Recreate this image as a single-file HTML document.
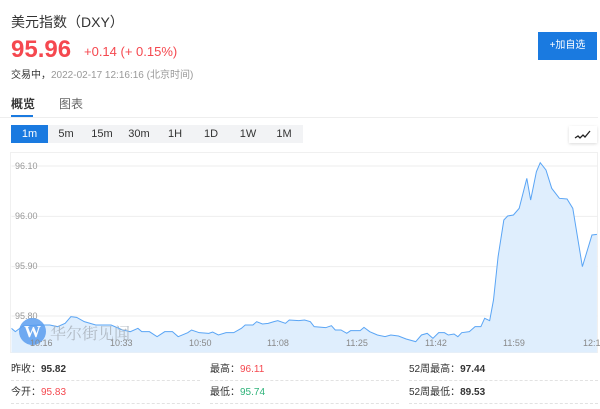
<!DOCTYPE html>
<html><head><meta charset="utf-8"><style>
*{margin:0;padding:0;box-sizing:border-box}
body{width:600px;height:409px;background:#fff;font-family:"Liberation Sans","Noto Sans CJK SC",sans-serif;position:relative;overflow:hidden;color:#333}
.a{position:absolute;white-space:nowrap}
.tb{position:absolute;top:125px;height:18px;font-size:11px;line-height:18px;text-align:center;color:#333}
.cell{position:absolute;width:189px;border-bottom:1px dashed #e2e2e2;height:22px;font-size:10px;line-height:22px;color:#333}
.cell b{font-weight:bold}
</style></head><body>
<div class="a" style="left:11px;top:12px;font-size:14px;color:#333">美元指数（DXY）</div>
<div class="a" style="left:11px;top:36px;font-size:24px;font-weight:bold;color:#f5484f">95.96</div>
<div class="a" style="left:84px;top:44px;font-size:13px;color:#f5484f">+0.14 (+ 0.15%)</div>
<div class="a" style="left:11px;top:66px;font-size:10px;color:#333">交易中，<span style="color:#999">2022-02-17 12:16:16 (北京时间)</span></div>
<div class="a" style="left:538px;top:32px;width:59px;height:28px;background:#1a7ae0;color:#fff;font-size:10px;line-height:28px;text-align:center">+加自选</div>
<div class="a" style="left:11px;top:95px;font-size:12px;font-weight:bold;color:#333">概览</div>
<div class="a" style="left:59px;top:95px;font-size:12px;color:#666">图表</div>
<div class="a" style="left:11px;top:115px;width:22px;height:2px;background:#1a7ae0"></div>
<div class="a" style="left:0;top:117px;width:598px;height:1px;background:#eee"></div>
<div class="a" style="left:11px;top:125px;width:292px;height:18px;background:#f2f3f5"></div>
<div class="tb" style="left:11px;width:37px;background:#1a7ae0;color:#fff">1m</div>
<div class="tb" style="left:55px;width:22px">5m</div>
<div class="tb" style="left:90px;width:24px">15m</div>
<div class="tb" style="left:126px;width:26px">30m</div>
<div class="tb" style="left:165px;width:20px">1H</div>
<div class="tb" style="left:201px;width:20px">1D</div>
<div class="tb" style="left:238px;width:20px">1W</div>
<div class="tb" style="left:274px;width:20px">1M</div>
<div class="a" style="left:569px;top:126px;width:28px;height:17px;background:#fff;box-shadow:0 1px 3px rgba(0,0,0,.15)">
<svg width="28" height="17" viewBox="0 0 28 17"><path d="M6 12 L9 10 L11 12 L14 9 L16 11 L21 5" fill="none" stroke="#222" stroke-width="1.3"/></svg></div>
<div class="a" style="left:10px;top:152px;width:588px;height:201px;border:1px solid #f0f0f0"></div>
<svg class="a" style="left:0;top:140px" width="600" height="220" viewBox="0 0 1566 660" preserveAspectRatio="none">
<g stroke="#eee" stroke-width="1" vector-effect="non-scaling-stroke">
<line x1="30" y1="78" x2="1560" y2="78" vector-effect="non-scaling-stroke"/>
<line x1="30" y1="229" x2="1560" y2="229" vector-effect="non-scaling-stroke"/>
<line x1="30" y1="380" x2="1560" y2="380" vector-effect="non-scaling-stroke"/>
<line x1="30" y1="528" x2="1560" y2="528" vector-effect="non-scaling-stroke"/>
</g>
<path d="M30 565 L40 575 L60 558 L100 555 L130 555 L150 560 L170 550 L185 530 L200 532 L220 545 L250 555 L290 555 L320 570 L340 575 L360 565 L370 575 L390 575 L410 590 L430 575 L450 575 L465 590 L490 578 L500 570 L520 578 L545 580 L555 576 L570 585 L590 578 L610 578 L630 565 L640 555 L660 555 L670 545 L685 552 L700 550 L715 545 L725 542 L745 550 L755 540 L780 542 L795 540 L810 545 L820 560 L850 563 L865 557 L875 570 L890 570 L905 580 L915 572 L940 572 L950 562 L965 575 L985 585 L1005 590 L1020 585 L1040 588 L1060 597 L1085 605 L1100 585 L1115 580 L1130 595 L1145 578 L1160 578 L1170 585 L1185 582 L1195 590 L1205 578 L1225 575 L1240 560 L1255 560 L1265 535 L1278 542 L1288 480 L1300 350 L1315 240 L1325 228 L1340 225 L1355 205 L1375 115 L1385 180 L1400 95 L1410 68 L1425 90 L1440 145 L1460 175 L1480 177 L1495 205 L1520 380 L1545 285 L1558 283 L1558 638 L30 638 Z" fill="#dfeefd" stroke="none"/>
<path d="M30 565 L40 575 L60 558 L100 555 L130 555 L150 560 L170 550 L185 530 L200 532 L220 545 L250 555 L290 555 L320 570 L340 575 L360 565 L370 575 L390 575 L410 590 L430 575 L450 575 L465 590 L490 578 L500 570 L520 578 L545 580 L555 576 L570 585 L590 578 L610 578 L630 565 L640 555 L660 555 L670 545 L685 552 L700 550 L715 545 L725 542 L745 550 L755 540 L780 542 L795 540 L810 545 L820 560 L850 563 L865 557 L875 570 L890 570 L905 580 L915 572 L940 572 L950 562 L965 575 L985 585 L1005 590 L1020 585 L1040 588 L1060 597 L1085 605 L1100 585 L1115 580 L1130 595 L1145 578 L1160 578 L1170 585 L1185 582 L1195 590 L1205 578 L1225 575 L1240 560 L1255 560 L1265 535 L1278 542 L1288 480 L1300 350 L1315 240 L1325 228 L1340 225 L1355 205 L1375 115 L1385 180 L1400 95 L1410 68 L1425 90 L1440 145 L1460 175 L1480 177 L1495 205 L1520 380 L1545 285 L1558 283" fill="none" stroke="#5aa5f5" stroke-width="1" vector-effect="non-scaling-stroke"/>
</svg>
<div class="a" style="left:15px;top:161px;font-size:9px;color:#999">96.10</div>
<div class="a" style="left:15px;top:211px;font-size:9px;color:#999">96.00</div>
<div class="a" style="left:15px;top:261px;font-size:9px;color:#999">95.90</div>
<div class="a" style="left:15px;top:311px;font-size:9px;color:#999">95.80</div>
<div class="a" style="left:19px;top:318px;width:27px;height:27px;border-radius:50%;background:#5b9ef0;opacity:.85;color:#fff;font:bold 17px 'Liberation Serif',serif;line-height:27px;text-align:center">W</div>
<div class="a" style="left:50px;top:321px;font-size:16px;font-family:'Liberation Serif','Noto Serif CJK SC',serif;color:#a9b2bb;opacity:.85">华尔街见闻</div>
<div class="a" style="left:30px;top:338px;font-size:9px;color:#888">10:16</div>
<div class="a" style="left:110px;top:338px;font-size:9px;color:#888">10:33</div>
<div class="a" style="left:189px;top:338px;font-size:9px;color:#888">10:50</div>
<div class="a" style="left:267px;top:338px;font-size:9px;color:#888">11:08</div>
<div class="a" style="left:346px;top:338px;font-size:9px;color:#888">11:25</div>
<div class="a" style="left:425px;top:338px;font-size:9px;color:#888">11:42</div>
<div class="a" style="left:503px;top:338px;font-size:9px;color:#888">11:59</div>
<div class="a" style="left:583px;top:338px;font-size:9px;color:#888">12:1</div>
<div class="cell" style="left:11px;top:359px">昨收：<b>95.82</b></div>
<div class="cell" style="left:210px;top:359px">最高：<b style="color:#f5484f;font-weight:normal">96.11</b></div>
<div class="cell" style="left:409px;top:359px">52周最高：<b>97.44</b></div>
<div class="cell" style="left:11px;top:382px">今开：<b style="color:#f5484f;font-weight:normal">95.83</b></div>
<div class="cell" style="left:210px;top:382px">最低：<b style="color:#2fb37a;font-weight:normal">95.74</b></div>
<div class="cell" style="left:409px;top:382px">52周最低：<b>89.53</b></div>
</body></html>
